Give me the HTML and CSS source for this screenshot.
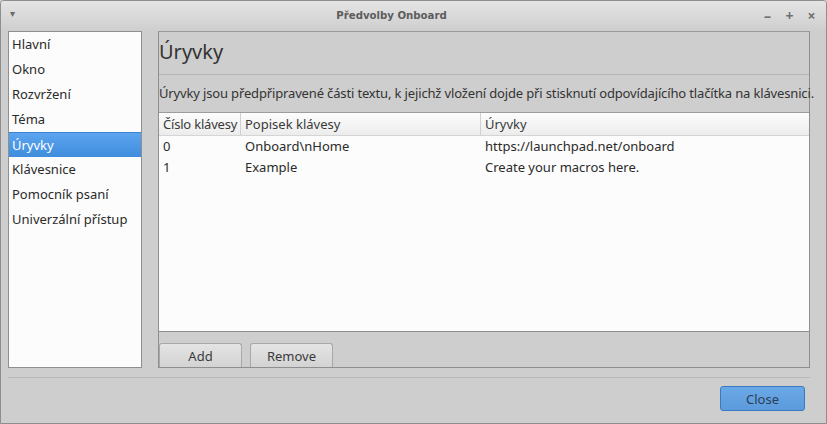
FILE: index.html
```html
<!DOCTYPE html>
<html lang="cs">
<head>
  <meta charset="UTF-8" />
  <title>Předvolby Onboard</title>
  <link rel="stylesheet" href="styles.css">
</head>
<body>
  <div class="window">
    <div class="titlebar">
      <span class="menu-arrow">▾</span>
      <span class="title">Předvolby Onboard</span>
      <div class="win-buttons">
        <span>–</span>
        <span>+</span>
        <span>×</span>
      </div>
    </div>

    <div class="main">
      <ul class="sidebar">
        <li>Hlavní</li>
        <li>Okno</li>
        <li>Rozvržení</li>
        <li>Téma</li>
        <li class="selected">Úryvky</li>
        <li>Klávesnice</li>
        <li>Pomocník psaní</li>
        <li>Univerzální přístup</li>
      </ul>

      <div class="panel">
        <div class="panel-head">Úryvky</div>
        <div class="panel-desc">Úryvky jsou předpřipravené části textu, k jejichž vložení dojde při stisknutí odpovídajícího tlačítka na klávesnici.</div>
        <div class="table">
          <div class="row head">
            <div class="c1">Číslo klávesy</div>
            <div class="c2">Popisek klávesy</div>
            <div class="c3">Úryvky</div>
          </div>
          <div class="row">
            <div class="c1">0</div>
            <div class="c2">Onboard\nHome</div>
            <div class="c3">https://launchpad.net/onboard</div>
          </div>
          <div class="row">
            <div class="c1">1</div>
            <div class="c2">Example</div>
            <div class="c3">Create your macros here.</div>
          </div>
        </div>
        <div class="panel-buttons">
          <button class="btn">Add</button>
          <button class="btn">Remove</button>
        </div>
      </div>
    </div>

    <div class="footer">
      <button class="btn primary">Close</button>
    </div>
  </div>
</body>
</html>
```

FILE: styles.css
```css
body {
  margin: 0;
  background: #cecece;
  font-family: "Noto Sans", "Open Sans", sans-serif;
  font-size: 13px;
  color: #2a2a2a;
}
.window {
  width: 827px;
  height: 424px;
  box-sizing: border-box;
  border: 1px solid #8e8e8e;
  border-radius: 4px 4px 0 0;
  background: #cecece;
  overflow: hidden;
}
.titlebar {
  height: 29px;
  display: flex;
  align-items: center;
  position: relative;
  background: linear-gradient(#e4e4e4, #cfcfcf);
  color: #5c5c5c;
}
.menu-arrow {
  position: absolute;
  left: 9px;
  top: 5px;
  font-size: 10px;
  color: #6a6a6a;
}
.title {
  flex: 1;
  text-align: center;
  font-family: "DejaVu Sans Condensed", "Liberation Sans Narrow", "Noto Sans", sans-serif;
  font-weight: bold;
  font-size: 11.3px;
  padding-right: 44px;
}
.win-buttons {
  position: absolute;
  right: 8px;
  top: 5px;
  display: flex;
  gap: 9px;
  font-size: 14px;
  font-weight: bold;
  color: #707070;
}
.win-buttons span {
  width: 13px;
  text-align: center;
}
.main {
  display: flex;
  gap: 16px;
  padding: 1px 16px 0 7px;
  height: 337px;
}
.sidebar {
  flex: none;
  list-style: none;
  margin: 0;
  padding: 0;
  width: 134px;
  box-sizing: border-box;
  border: 1px solid #8f8f8f;
  background: #fcfcfc;
}
.sidebar li {
  height: 25px;
  line-height: 25px;
  padding-left: 3px;
  white-space: nowrap;
}
.sidebar li.selected {
  background: linear-gradient(#5ba4f0, #3f8ddc);
  color: #fff;
  border-top: 1px solid #3d82cc;
  height: 24px;
  line-height: 24px;
}
.panel {
  flex: 1;
  min-width: 0;
  box-sizing: border-box;
  border: 1px solid #8f8f8f;
  border-top-color: #9a9a9a;
  display: flex;
  flex-direction: column;
}
.panel-head {
  height: 42px;
  line-height: 40px;
  font-size: 20px;
  border-bottom: 1px solid #b4b4b4;
  color: #333;
}
.panel-desc {
  height: 37px;
  line-height: 36px;
  white-space: nowrap;
  color: #333;
  letter-spacing: -0.15px;
}
.table {
  height: 220px;
  box-sizing: border-box;
  background: #fcfcfc;
  border-top: 1px solid #9c9c9c;
  border-bottom: 1px solid #8f8f8f;
}
.row {
  display: flex;
  height: 21px;
  line-height: 20px;
}
.row.head {
  height: 22px;
  line-height: 22px;
  background: linear-gradient(#fdfdfd, #ececec);
  border-bottom: 1px solid #d5d5d5;
  color: #3a3a3a;
}
.row div {
  padding-left: 4px;
  box-sizing: border-box;
  white-space: nowrap;
}
.c1 { width: 82px; flex: none; }
.c2 { width: 240px; flex: none; }
.c3 { flex: 1; }
.row.head .c1 {
  letter-spacing: -0.2px;
}
.row.head .c1,
.row.head .c2 {
  border-right: 1px solid #d0d0d0;
}
.panel-buttons {
  display: flex;
  gap: 8px;
  padding-top: 11px;
  align-items: flex-start;
}
.btn {
  font-family: "Noto Sans", "Open Sans", sans-serif;
  font-size: 13px;
  color: #3a3a3a;
  width: 83px;
  height: 26px;
  border: 1px solid #a8a8a8;
  border-radius: 3px;
  background: linear-gradient(#e4e4e4, #d3d3d3);
  padding: 0;
  margin: 0;
}
.panel-buttons .btn {
  height: 24px;
  border-bottom: none;
  border-radius: 3px 3px 0 0;
}
.footer {
  margin: 9px 16px 0 7px;
  border-top: 1px solid #b8b8b8;
  display: flex;
  justify-content: flex-end;
  padding-top: 8px;
  padding-right: 5px;
}
.btn.primary {
  width: 85px;
  height: 25px;
  background: linear-gradient(#6aa8e6, #5c9bdc);
  border-color: #3b7ac2;
  color: #2b3e55;
}
```
